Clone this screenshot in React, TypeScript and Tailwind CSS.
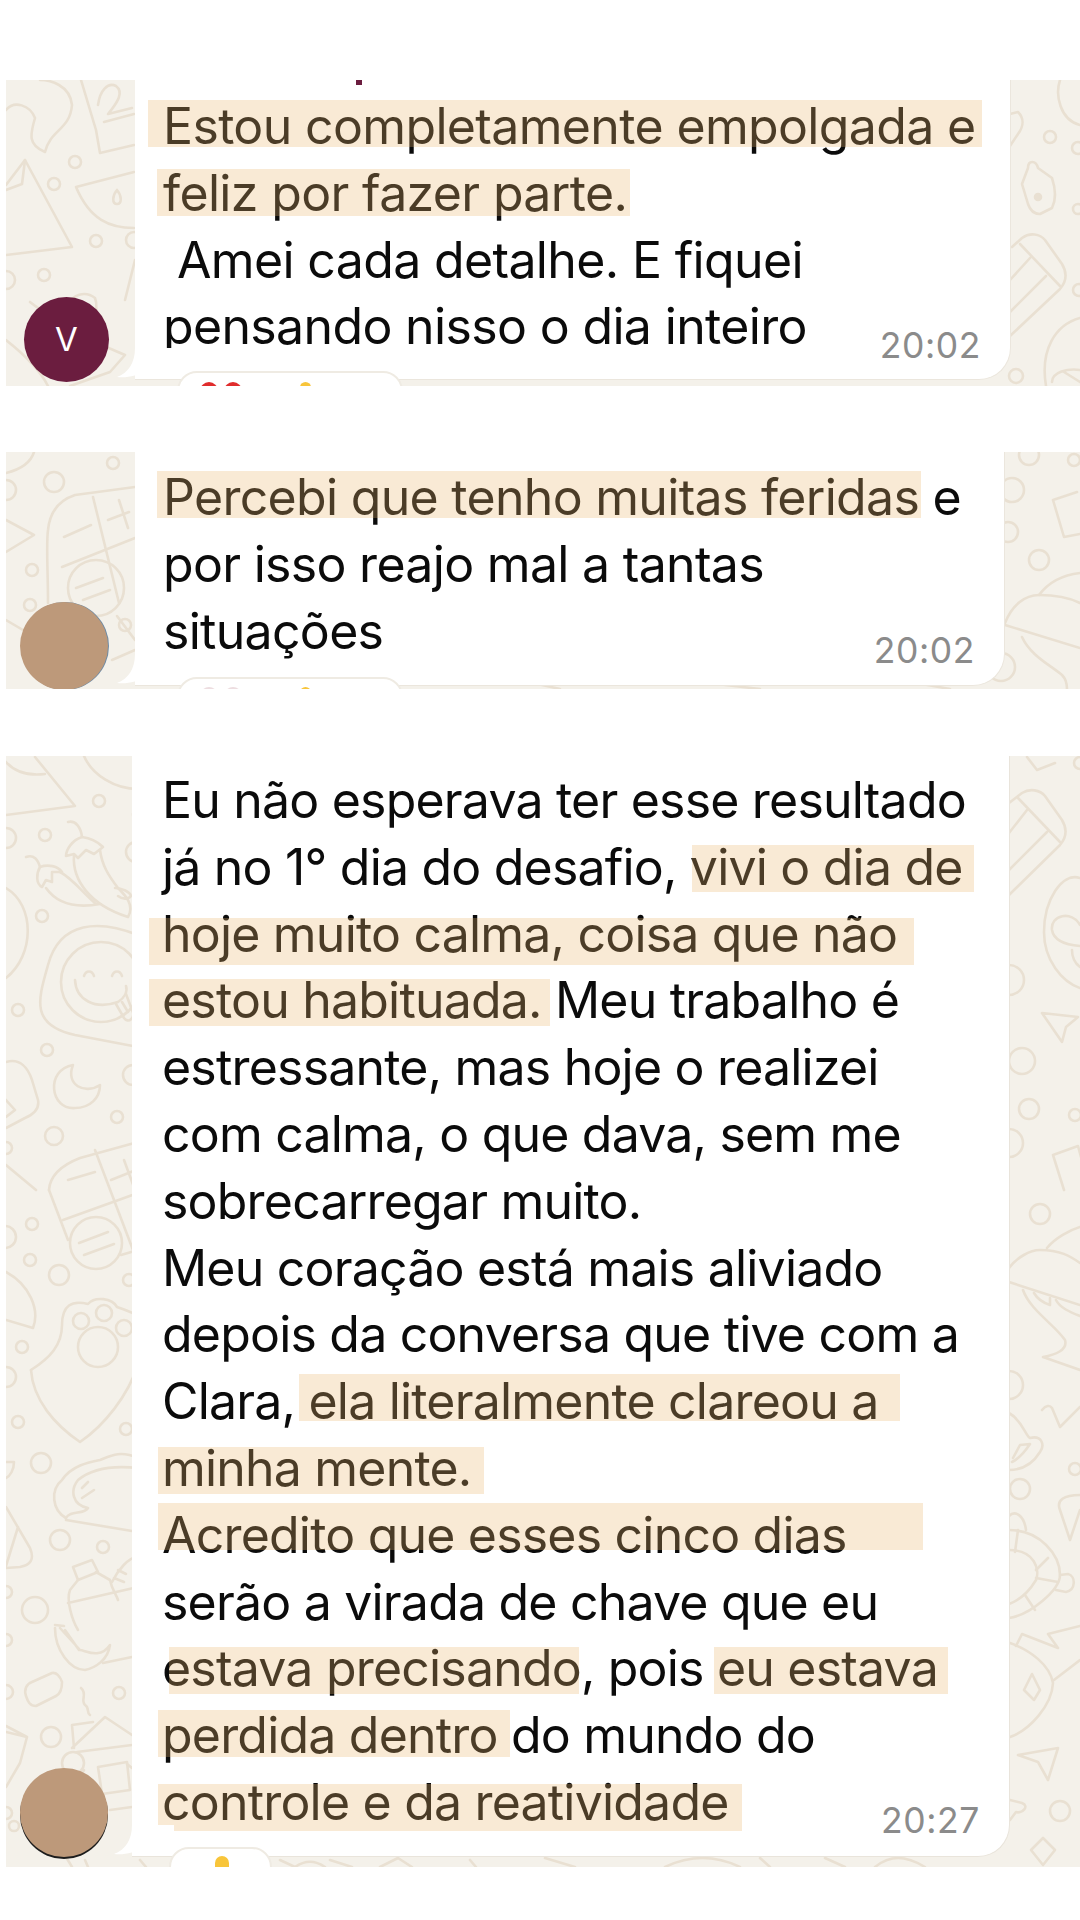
import type { ReactNode } from 'react'

const panelOne = {
  lines: [
    'M6 110C14 100 30 105 35 118C30 135 28 145 45 152C50 130 70 130 72 105C70 85 50 80 40 80',
    'M81 80L96 130L100 153L134 145',
    'M98 105C100 90 108 82 116 86C124 92 118 102 108 114L132 108M104 122L134 114',
    'M6 185L25 160L72 247L6 255',
    'M25 160L22 184L6 190',
    'M76 187L134 172M76 187C90 220 110 228 134 228',
    'M117 190C112 196 112 204 117 204C122 204 122 196 117 190',
    'M68 305C72 295 85 290 95 298C100 310 90 335 85 345',
    'M30 302C40 310 55 320 70 318',
    'M90 340L125 355L110 372L70 386',
    'M6 340C25 355 40 370 48 386',
    'M135 260L125 300',
    'M1060 80C1055 95 1060 120 1080 125',
    'M1010 114L1018 112C1024 118 1024 126 1018 134L1010 146',
    'M1028 168C1028 160 1036 160 1038 168L1052 178C1056 190 1056 200 1052 208L1040 214C1034 214 1030 210 1028 204L1022 184Z',
    'M1012 247L1022 238C1030 232 1040 234 1045 240L1062 264C1068 274 1066 282 1060 289L1010 336',
    'M1020 244L1060 286M1030 258L1010 280M1046 276L1010 312',
    'M1080 318C1055 325 1040 350 1046 386',
    'M1080 370C1068 368 1052 372 1052 382M1064 372L1080 382',
  ],
  circles: [
    [75, 162, 6], [54, 184, 6], [96, 241, 6], [44, 275, 6], [6, 280, 9], [134, 240, 8], [1050, 137, 6],
    [1078, 148, 6], [1078, 209, 5], [1079, 290, 6], [1016, 376, 7],
  ],
  dots: [[1038, 197, 3]],
}

const panelTwo = {
  lines: [
    'M6 473C18 470 30 465 34 452',
    'M6 520L34 535L6 552',
    'M48 603C48 570 46 545 48 530C50 510 60 500 75 495L135 487',
    'M93 497L119 603',
    'M62 567L135 538',
    'M108 520L129 512M119 500L128 528M64 537L91 525',
    'M76 588L103 578M83 600L110 590',
    'M6 620L40 640L60 689',
    'M117 616L135 640M112 660L135 650',
    'M1053 500L1077 492M1053 500L1064 537L1080 534',
    'M1005 623C1012 605 1025 595 1039 595C1055 595 1068 597 1080 603',
    'M1005 625L1080 648M1039 595C1048 583 1062 575 1080 573',
    'M1022 637C1030 655 1050 665 1062 675C1067 680 1067 685 1067 689',
    'M200 680L240 689M300 682L330 689M520 680L560 689M700 682L760 689M900 680L950 689',
  ],
  circles: [
    [113, 463, 6], [54, 482, 10], [32, 570, 6], [30, 605, 6], [125, 625, 6], [96, 588, 28], [6, 490, 10],
    [1029, 455, 10], [1074, 460, 6], [1012, 490, 12], [1008, 532, 10], [1039, 560, 10], [1001, 667, 14],
  ],
  dots: [],
}

const panelThree = {
  lines: [
    'M6 815L75 806L35 757',
    'M6 762C15 772 28 776 45 774',
    'M84 756C92 775 115 789 138 789',
    'M68 822C76 820 81 828 82 837',
    'M82 837C72 840 66 850 66 856L74 854L78 858L86 850L94 854L103 847C96 840 90 838 82 837',
    'M74 855C72 880 90 905 128 917C135 905 125 895 118 888C108 875 102 865 100 850',
    'M115 888C122 888 130 892 131 896C128 900 122 899 118 896',
    'M26 857C34 854 38 860 40 867',
    'M40 867C36 874 36 884 42 887L46 880L52 882L52 872L62 872C58 866 48 864 40 867',
    'M46 888C58 905 78 908 100 904M60 872C72 878 82 892 96 904',
    'M6 888C35 905 35 955 6 978',
    'M138 935C100 920 60 920 48 965C38 1000 30 1025 75 1035L138 1047',
    'M75 980C76 1000 95 1010 118 1002C124 998 128 992 126 986',
    'M84 976C86 970 92 970 94 976M112 976C114 970 120 970 122 976',
    'M116 1004L124 1018C128 1024 136 1018 132 1010L126 994M122 1002L128 1012',
    'M73 1065C45 1070 50 1110 75 1108C90 1108 100 1098 100 1085C85 1095 65 1085 73 1065',
    'M6 1062C20 1058 28 1068 32 1080L38 1100C40 1110 32 1115 25 1118L6 1128M6 1100L15 1110L6 1117',
    'M6 1165L36 1190',
    'M49 1190C50 1175 62 1165 80 1158L138 1142',
    'M49 1190L68 1240M63 1220L138 1193M95 1150L133 1250M111 1180L136 1170M124 1160L135 1190',
    'M68 1180L95 1172M79 1243L108 1232M84 1255L114 1244M121 1255L138 1250',
    'M6 1272C30 1285 40 1310 33 1328L6 1320',
    'M31 1370C50 1358 62 1345 62 1325C62 1305 72 1300 88 1304C95 1296 112 1298 117 1307C125 1310 132 1312 138 1316',
    'M31 1370C33 1400 55 1425 80 1442C105 1425 128 1395 138 1365',
    'M6 1462L14 1462C14 1470 10 1476 6 1478',
    'M66 1518C52 1510 50 1490 62 1480C72 1465 90 1462 100 1460C110 1456 120 1450 138 1458',
    'M66 1520L138 1532M138 1468C110 1465 90 1470 78 1480C70 1490 72 1505 88 1508C84 1515 70 1510 66 1518',
    'M82 1488L88 1482M82 1498L94 1490',
    'M6 1507L30 1548C35 1560 30 1565 20 1567L6 1568M18 1527L6 1566',
    'M73 1567L92 1560L98 1572L78 1580Z',
    'M78 1580L70 1590C66 1600 72 1620 78 1630M96 1572L110 1580C112 1590 116 1594 118 1600M68 1603L138 1587',
    'M112 1582C118 1570 128 1558 138 1556M118 1570L126 1574M114 1578L124 1582',
    'M65 1630L79 1650M55 1628C55 1650 70 1670 85 1670C95 1668 108 1660 110 1645C100 1660 85 1650 80 1650L60 1628',
    'M103 1663L132 1657M55 1625L64 1626',
    'M32 1682L52 1673C56 1672 60 1676 62 1682C62 1690 60 1694 56 1696L36 1706C30 1706 28 1702 26 1696C24 1690 26 1684 32 1682',
    'M81 1688C88 1694 80 1700 85 1705C90 1708 86 1712 90 1715',
    'M6 1726L27 1737L20 1763L6 1787M6 1732L27 1737',
    'M72 1748L105 1717L132 1735M72 1725L93 1722M72 1725L74 1748M77 1752L132 1745',
    'M98 1767L127 1762L130 1790L102 1794Z',
    'M110 1810L132 1807M127 1764L132 1768M84 1770L78 1780',
    'M66 1857L72 1867M85 1860L88 1867M140 1860L146 1867M280 1860L295 1867C305 1860 315 1860 325 1867',
    'M330 1860L352 1867M380 1867L398 1858L412 1867M470 1860L476 1867M545 1858L575 1867',
    'M665 1867C690 1855 715 1855 740 1867M760 1858L770 1867M825 1858L845 1867M875 1867C890 1855 905 1855 925 1867',
    'M1027 757L1037 770L1055 763',
    'M1009 803L1022 793C1030 788 1040 790 1045 796L1062 820C1068 830 1066 838 1060 845L1009 895',
    'M1018 798L1060 842M1027 810L1009 833M1047 832L1009 870',
    'M1080 878C1062 872 1044 900 1044 932C1044 960 1062 982 1080 988',
    'M1080 925C1072 910 1050 915 1052 930C1054 942 1068 945 1080 946M1072 950C1072 958 1076 964 1080 967',
    'M1042 1013L1078 1017L1066 1027L1062 1042Z',
    'M1053 1155L1078 1146L1090 1190M1053 1155L1064 1190',
    'M1009 1268C1016 1258 1030 1250 1040 1250C1060 1250 1070 1256 1080 1263M1009 1282L1080 1305',
    'M1047 1248C1055 1238 1070 1230 1080 1227',
    'M1023 1290C1030 1310 1055 1325 1065 1340C1068 1350 1055 1355 1043 1357L1080 1370',
    'M1034 1293C1038 1300 1044 1303 1050 1305L1050 1298M1056 1300C1060 1308 1070 1312 1080 1316',
    'M1042 1410C1046 1405 1050 1405 1052 1408L1060 1427L1080 1407',
    'M1009 1413C1022 1420 1025 1435 1030 1438C1042 1435 1045 1445 1040 1452C1032 1465 1020 1470 1009 1470',
    'M1012 1462C1020 1458 1026 1450 1030 1444L1020 1445L1013 1458',
    'M1080 1495C1064 1495 1056 1500 1060 1510L1070 1540L1080 1510',
    'M1009 1530C1040 1530 1060 1555 1060 1575C1060 1590 1030 1615 1009 1618',
    'M1009 1550C1035 1550 1040 1570 1036 1580C1030 1590 1020 1600 1009 1604',
    'M1018 1530L1015 1552M1036 1570L1048 1558M1036 1578L1058 1582M1025 1595L1035 1610',
    'M1009 1516C1015 1510 1024 1515 1026 1530M1060 1575L1068 1574C1076 1576 1076 1590 1066 1592L1056 1590',
    'M1010 1643C1030 1650 1050 1665 1053 1683C1052 1705 1030 1730 1010 1737',
    'M1016 1646L1022 1634L1058 1648L1048 1634L1080 1626M1054 1680L1080 1660',
    'M1032 1674L1040 1690L1034 1700L1024 1690Z',
    'M1018 1755L1058 1748L1048 1780L1038 1762Z',
    'M1010 1800L1022 1803C1030 1806 1022 1814 1016 1812L1010 1820',
    'M1031 1850L1043 1838L1055 1850L1043 1865Z',
  ],
  circles: [
    [99, 801, 6], [45, 835, 6], [42, 916, 6], [18, 1010, 6], [47, 1050, 6], [117, 1117, 6], [54, 1136, 9], [6, 838, 10],
    [136, 852, 10], [133, 1075, 10], [138, 815, 5], [6, 1148, 6], [101, 982, 40],
    [96, 1243, 26], [32, 1224, 6], [30, 1260, 6], [59, 1275, 10], [129, 1280, 6], [5, 1237, 11], [22, 1347, 6], [6, 1377, 10],
    [18, 1422, 6], [126, 1429, 6], [41, 1463, 10], [81, 1321, 8], [104, 1313, 8], [124, 1328, 8], [98, 1347, 20],
    [60, 1540, 10], [103, 1547, 6], [6, 1592, 6], [35, 1610, 13], [119, 1693, 6], [51, 1737, 10], [73, 1763, 11], [6, 1640, 6], [6, 1692, 7],
    [6, 1813, 6], [14, 1826, 5],
    [1080, 763, 6], [1009, 980, 15], [1022, 1061, 13], [1029, 1109, 10], [1075, 1115, 6], [1009, 1143, 14],
    [1040, 1214, 10], [1009, 1385, 14], [1020, 1489, 10], [1075, 1469, 6], [1060, 1811, 10],
  ],
  dots: [],
}

type Doodles = { lines: string[]; circles: number[][]; dots: number[][] }

// Wallpaper is drawn in page coordinates, the viewBox crops it to the panel
function Wallpaper({ doodles, viewBox }: { doodles: Doodles; viewBox: string }) {
  return (
    <svg
      aria-hidden="true"
      viewBox={viewBox}
      className="absolute inset-0 h-full w-full"
      fill="none"
      stroke="#e9e0d2"
      strokeWidth="2.6"
      strokeLinecap="round"
      strokeLinejoin="round"
    >
      {doodles.lines.map((d) => (
        <path key={d} d={d} />
      ))}
      {doodles.circles.map(([cx, cy, r]) => (
        <circle key={`${cx}-${cy}`} cx={cx} cy={cy} r={r} />
      ))}
      {doodles.dots.map(([cx, cy, r]) => (
        <circle key={`${cx}-${cy}`} cx={cx} cy={cy} r={r} fill="#e9e0d2" />
      ))}
    </svg>
  )
}

function Tail() {
  return (
    <svg aria-hidden="true" viewBox="0 0 60 32" className="absolute bottom-[-1px] left-[-18px] h-[32px] w-[60px]">
      <path d="M18 0C18 15 11 25 0 29C10 30 21 28 29 22C38 28 48 30 60 30L60 0Z" fill="#ffffff" />
    </svg>
  )
}

// Marker stroke painted over the text, so the letters tint through it
function Mark({ className, children }: { className: string; children: ReactNode }) {
  return (
    <span className="relative">
      {children}
      <span className={`absolute h-[47px] bg-[#eab76e4a] ${className}`} />
    </span>
  )
}

function Time({ children, className }: { children: string; className: string }) {
  return <span className={`self-end text-[35.5px] leading-[40px] tracking-[0.6px] text-[#8b8b8b] ${className}`}>{children}</span>
}

function Dot({ className }: { className: string }) {
  return <span className={`h-[12px] rounded-t-full ${className}`} />
}

export default function App() {
  return (
    <div className="min-h-[1920px] bg-white pt-[80px] pl-[6px] text-[50px] leading-[66.8px] text-[#0b0b0b] [font-family:Inter,sans-serif]">
      {/* First message */}
      <section className="relative flex h-[306px] items-end overflow-hidden bg-[#f4f1ea] tracking-[-0.65px]">
        <Wallpaper doodles={panelOne} viewBox="6 80 1074 306" />
        <div className="relative mb-[4px] ml-[18px] flex h-[85px] w-[85px] shrink-0 items-center justify-center rounded-full bg-[#6b1d3f] text-[33px] leading-none tracking-normal text-white">
          V
        </div>
        <div className="relative ml-[26px] h-[300px] w-[876px] self-start whitespace-nowrap rounded-br-[32px] border-r border-b border-[#ebe6dd] bg-white pt-[13px] pl-[28px]">
          <span className="absolute top-0 left-[221px] h-[5px] w-[6px] bg-[#6b1d3f]" />
          <div>
            <Mark className="top-[4px] right-[-6px] left-[-15px]">Estou completamente empolgada e</Mark>
          </div>
          <div>
            <Mark className="top-[6px] right-[-3px] left-[-6px]">feliz por fazer parte.</Mark>
          </div>
          <div className="pl-[14px]">Amei cada detalhe. E fiquei</div>
          <div className="flex justify-between">
            <span>pensando nisso o dia inteiro</span>
            <Time className="mr-[29px] mb-[-6px]">20:02</Time>
          </div>
          <Tail />
          <div className="absolute top-full left-[42px] mt-[-8px] flex h-[40px] w-[226px] gap-[6px] rounded-[24px] border-2 border-[#efebe3] bg-white pt-[9px] pl-[21px]">
            <Dot className="w-[18px] bg-[#e02c2c]" />
            <Dot className="w-[18px] bg-[#e02c2c]" />
            <Dot className="ml-[52px] w-[11px] bg-[#f8c53a]" />
          </div>
        </div>
      </section>

      {/* Second message */}
      <section className="relative mt-[66px] flex h-[237px] items-end overflow-hidden bg-[#f4f1ea] tracking-[-0.7px]">
        <Wallpaper doodles={panelTwo} viewBox="6 452 1074 237" />
        <div className="relative mb-[-1px] ml-[14px] h-[88px] w-[88px] shrink-0 rounded-full bg-[#bd997a] shadow-[1px_0_0_#6d8aa5]" />
        <div className="relative ml-[27px] h-[234px] w-[870px] self-start whitespace-nowrap rounded-br-[32px] border-r border-b border-[#ebe6dd] bg-white pt-[12px] pl-[28px]">
          <div>
            <Mark className="top-[4px] right-[-2px] left-[-6px]">Percebi que tenho muitas feridas</Mark> e
          </div>
          <div>por isso reajo mal a tantas</div>
          <div className="flex justify-between">
            <span>situações</span>
            <Time className="mr-[29px] mb-[-7px]">20:02</Time>
          </div>
          <Tail />
          <div className="absolute top-full left-[42px] mt-[-8px] flex h-[40px] w-[226px] gap-[6px] rounded-[24px] border-2 border-[#efebe3] bg-white pt-[8px] pl-[21px]">
            <Dot className="w-[18px] bg-[#eddde0]" />
            <Dot className="w-[18px] bg-[#eddde0]" />
            <Dot className="ml-[52px] w-[11px] bg-[#f8c53a]" />
          </div>
        </div>
      </section>

      {/* Third message */}
      <section className="relative mt-[67px] flex h-[1111px] items-end overflow-hidden bg-[#f4f1ea] tracking-[-0.8px]">
        <Wallpaper doodles={panelThree} viewBox="6 756 1074 1111" />
        <div className="relative mb-[10px] ml-[14px] h-[89px] w-[88px] shrink-0 rounded-full bg-[#bd997a] shadow-[0_2px_0_#1c1c1c]" />
        <div className="relative ml-[24px] h-[1101px] w-[878px] self-start whitespace-nowrap rounded-br-[32px] border-r border-b border-[#e9e4db] bg-white pt-[11px] pl-[30px]">
          <div>Eu não esperava ter esse resultado</div>
          <div>
            já no 1° dia do desafio, <Mark className="top-[8px] right-[-11px] left-[2px]">vivi o dia de</Mark>
          </div>
          <div>
            <Mark className="top-[14px] right-[-17px] left-[-13px]">hoje muito calma, coisa que não</Mark>
          </div>
          <div>
            <Mark className="top-[9px] right-[-8px] left-[-13px]">estou habituada.</Mark> Meu trabalho é
          </div>
          <div>estressante, mas hoje o realizei</div>
          <div>com calma, o que dava, sem me</div>
          <div>sobrecarregar muito.</div>
          <div>Meu coração está mais aliviado</div>
          <div>depois da conversa que tive com a</div>
          <div>
            Clara, <Mark className="top-[3px] right-[-22px] left-[-9px]">ela literalmente clareou a</Mark>
          </div>
          <div>
            <Mark className="top-[9px] right-[-13px] left-[-4px]">minha mente.</Mark>
          </div>
          <div>
            <Mark className="top-[-2px] right-[-76px] left-[-4px]">Acredito que esses cinco dias</Mark>
          </div>
          <div>serão a virada de chave que eu</div>
          <div>
            <Mark className="top-[9px] right-[2px] left-[7px]">estava precisando</Mark>, pois{' '}
            <Mark className="top-[9px] right-[-10px] left-[-3px]">eu estava</Mark>
          </div>
          <div>
            <Mark className="top-[5px] right-[-12px] left-[-4px]">perdida dentro</Mark> do mundo do
          </div>
          <div className="flex justify-between">
            <span>
              <Mark className="top-[12px] right-[-13px] left-[-4px]">controle e da reatividade</Mark>
            </span>
            <Time className="mr-[29px] mb-[-5px]">20:27</Time>
          </div>
          <Tail />
          <div className="absolute top-full left-[37px] mt-[-9px] flex h-[40px] w-[103px] rounded-[24px] border-2 border-[#efebe3] bg-white pt-[7px] pl-[44px]">
            <Dot className="w-[14px] bg-[#f8c53a]" />
          </div>
        </div>
      </section>
    </div>
  )
}
